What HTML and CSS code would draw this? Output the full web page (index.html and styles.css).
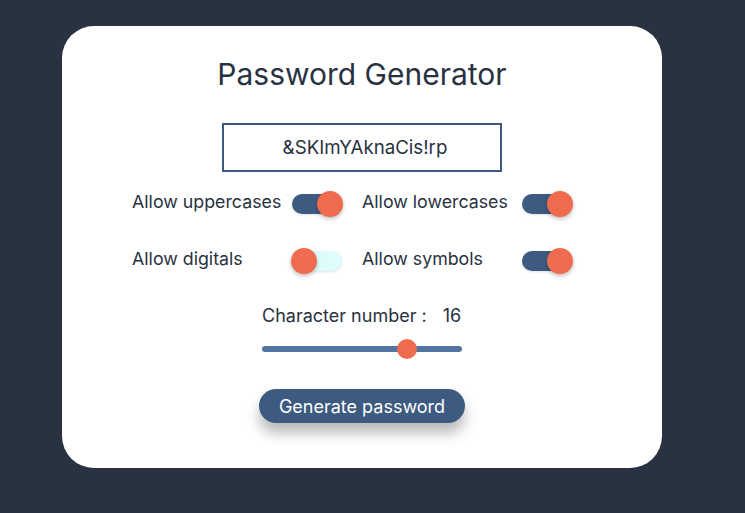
FILE: index.html
```html
<!DOCTYPE html>
<html lang="en">
<head>
<meta charset="utf-8">
<title>Password Generator</title>
<link rel="stylesheet" href="styles.css">
</head>
<body>
<main class="card">
  <h1 class="title">Password Generator</h1>
  <div class="output">&amp;SKImYAknaCis!rp</div>
  <div class="options">
    <label class="option">
      <span class="option-label">Allow uppercases</span>
      <span class="toggle on"><span class="knob"></span></span>
    </label>
    <label class="option">
      <span class="option-label">Allow lowercases</span>
      <span class="toggle on"><span class="knob"></span></span>
    </label>
    <label class="option">
      <span class="option-label">Allow digitals</span>
      <span class="toggle"><span class="knob"></span></span>
    </label>
    <label class="option">
      <span class="option-label">Allow symbols</span>
      <span class="toggle on"><span class="knob"></span></span>
    </label>
  </div>
  <div class="length">
    <span class="length-label">Character number :</span>
    <span class="length-value">16</span>
  </div>
  <input class="slider" type="range" min="4" max="20" value="16">
  <button class="generate">Generate password</button>
</main>
</body>
</html>
```

FILE: styles.css
```css
* { box-sizing: border-box; }

html, body {
  margin: 0;
  height: 100%;
}

body {
  background: #293241;
  font-family: Inter, "Noto Sans", sans-serif;
  color: #293241;
  padding: 26px 0 0 62px;
}

.card {
  width: 600px;
  height: 442px;
  background: #ffffff;
  border-radius: 32px;
  display: flex;
  flex-direction: column;
  align-items: center;
  padding-top: 30px;
}

.title {
  margin: 0;
  font-size: 30px;
  font-weight: 400;
  line-height: 36px;
  color: #293241;
}

.output {
  margin-top: 31px;
  width: 280px;
  height: 49px;
  border: 2px solid #3d5a80;
  display: flex;
  align-items: center;
  justify-content: center;
  padding-left: 6px;
  font-size: 18.7px;
  color: #293241;
}

.options {
  margin-top: 16px;
  display: grid;
  grid-template-columns: 230px 230px;
  row-gap: 25px;
}

.option {
  display: flex;
  align-items: center;
  height: 32px;
}

.option-label {
  width: 160px;
  font-size: 17.8px;
  margin-top: -6px;
}

.toggle {
  position: relative;
  width: 50px;
  height: 20px;
  border-radius: 10px;
  background: #e0fbfc;
  box-shadow: 0 1px 3px rgba(0, 0, 0, 0.12);
}

.toggle.on {
  background: #3d5a80;
}

.knob {
  position: absolute;
  top: -3px;
  left: -1px;
  width: 26px;
  height: 26px;
  border-radius: 50%;
  background: #ee6c4d;
  box-shadow: 0 2px 4px rgba(0, 0, 0, 0.25);
}

.toggle.on .knob {
  left: 25px;
}

.length {
  margin-top: 27px;
  width: 200px;
  display: flex;
  font-size: 18px;
  line-height: 24px;
}

.length-value {
  margin-left: 16px;
}

.slider {
  -webkit-appearance: none;
  appearance: none;
  margin: 11px 0 0;
  width: 200px;
  height: 20px;
  background: transparent;
}

.slider::-webkit-slider-runnable-track {
  height: 6px;
  border-radius: 3px;
  background: #5275a0;
}

.slider::-webkit-slider-thumb {
  -webkit-appearance: none;
  appearance: none;
  width: 20px;
  height: 20px;
  margin-top: -7px;
  border-radius: 50%;
  background: #ee6c4d;
  border: none;
}

.generate {
  margin-top: 30px;
  width: 206px;
  height: 34px;
  border: none;
  border-radius: 17px;
  background: #3d5a80;
  color: #ffffff;
  font-family: Inter, "Noto Sans", sans-serif;
  font-size: 18px;
  box-shadow: 0 10px 14px rgba(0, 0, 0, 0.28);
  cursor: pointer;
}
```
